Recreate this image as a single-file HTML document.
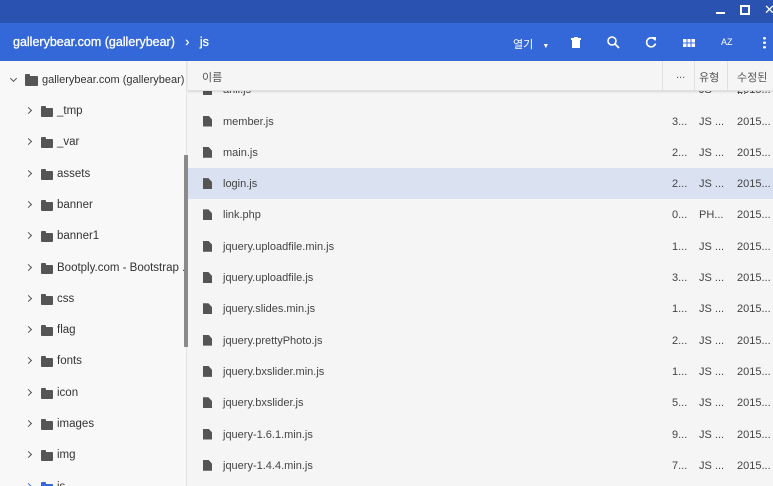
<!DOCTYPE html><html><head><meta charset="utf-8"><style>
*{margin:0;padding:0;box-sizing:border-box}
html,body{width:773px;height:486px;overflow:hidden}
body{font-family:"Liberation Sans","Noto Sans CJK KR",sans-serif;background:#f5f5f5;position:relative;font-size:13px;color:#333}
.tb{position:absolute;left:0;top:0;width:773px;height:23px;background:#2a52b0;z-index:5}
.bar{position:absolute;left:0;top:23px;width:773px;height:38px;background:#3468d8;color:#fff;z-index:5}
.left{position:absolute;left:0;top:61px;width:187px;height:425px;background:#f8f8f8;border-right:1px solid #e4e4e4;overflow:hidden}
.sb{position:absolute;left:184px;top:155px;width:4px;height:192px;background:#8a8a8a}
.t{position:absolute;height:20px;line-height:20px;font-size:11.5px;color:#333;white-space:nowrap}
.chev{position:absolute;width:5px;height:5px;border-right:1.3px solid #555;border-top:1.3px solid #555;transform:rotate(45deg)}
.fold{position:absolute;width:12px;height:9px;background:#555;border-radius:1px}
.fold:before{content:"";position:absolute;left:0;top:-2px;width:5px;height:3px;background:inherit;border-radius:1px 1px 0 0}
.hdr{position:absolute;left:188px;top:61px;width:585px;height:30px;background:#f5f5f5;border-bottom:1px solid #e0e0e0;font-size:11px;color:#555;z-index:4;box-shadow:0 1px 2px rgba(0,0,0,.12)}
.row{position:absolute;left:188px;width:585px;height:31px}
.fi{position:absolute;left:15px;top:10px;width:9px;height:11px;background:#555;clip-path:polygon(0 0,60% 0,100% 35%,100% 100%,0 100%)}
.row span{position:absolute;top:10px;font-size:11px;color:#444;white-space:nowrap}
#tree{position:absolute;left:0;top:0;width:187px;height:486px;overflow:hidden}
</style></head><body>
<div class="tb">
<div style="position:absolute;left:716px;top:12px;width:9px;height:2px;background:#fff"></div>
<div style="position:absolute;left:740px;top:5px;width:10px;height:10px;border:2px solid #fff"></div>
<div style="position:absolute;left:764px;top:2px;color:#fff;font-size:13px">✕</div>
</div>
<div class="bar">
<div style="position:absolute;left:13px;top:12px;font-size:12.5px;-webkit-text-stroke:0.3px #fff">gallerybear.com (gallerybear)&nbsp;&nbsp;&nbsp;›&nbsp;&nbsp;&nbsp;js</div>
<div style="position:absolute;left:513px;top:13px;font-size:11px">열기&nbsp;&nbsp; <span style="font-size:7px">▼</span></div>
<svg style="position:absolute;left:571px;top:14px" width="10" height="11"><rect x="0" y="1" width="10" height="2" fill="#fff"/><rect x="3" y="0" width="4" height="2" fill="#fff"/><rect x="1" y="3" width="8" height="8" fill="#fff"/></svg>
<svg style="position:absolute;left:607px;top:13px" width="13" height="13"><circle cx="5" cy="5" r="4" stroke="#fff" stroke-width="1.6" fill="none"/><line x1="8" y1="8" x2="12" y2="12" stroke="#fff" stroke-width="1.8"/></svg>
<svg style="position:absolute;left:645px;top:13px" width="12" height="12"><path d="M10 4A4.5 4.5 0 1 0 10.5 7.5" stroke="#fff" stroke-width="1.6" fill="none"/><path d="M7 1L11 1L11 5Z" fill="#fff"/></svg>
<svg style="position:absolute;left:683px;top:16px" width="12" height="8"><rect width="12" height="8" fill="#fff"/><path d="M4 0V8M8 0V8M0 4H12" stroke="#3468d8" stroke-width="1"/></svg>
<div style="position:absolute;left:721px;top:14px;font-size:9px">AZ</div>
<div style="position:absolute;left:763px;top:13px;width:3px;height:13px;background:radial-gradient(circle,#fff 1.3px,transparent 1.5px) 0 0/3px 4.5px"></div>
</div>
<div class="left"></div>
<div id="tree"></div>
<div class="sb"></div>
<div id="rows"></div>
<div class="hdr">
<div style="position:absolute;left:14px;top:8px">이름</div>
<div style="position:absolute;left:474px;top:0;height:30px;border-left:1px solid #e0e0e0"></div>
<div style="position:absolute;left:488px;top:8px">...</div>
<div style="position:absolute;left:506px;top:0;height:30px;border-left:1px solid #e0e0e0"></div>
<div style="position:absolute;left:511px;top:8px">유형</div>
<div style="position:absolute;left:539px;top:0;height:30px;border-left:1px solid #e0e0e0"></div>
<div style="position:absolute;left:549px;top:8px">수정된 ...</div>
</div>
<script>
var tn=["_tmp","_var","assets","banner","banner1","Bootply.com - Bootstrap ...","css","flag","fonts","icon","images","img","js"];
var h='<div class="chev" style="left:11px;top:76px;transform:rotate(135deg)"></div><div class="fold" style="left:25px;top:76px;width:13px;height:10px"></div><div class="t" style="left:42px;top:70px;font-size:11px">gallerybear.com (gallerybear)</div>';
tn.forEach(function(n,i){var y=111+i*31.3;var c=i==12?"#3468d8":"#555";
h+='<div class="chev" style="left:26px;top:'+(y-3)+'px;border-color:'+c+'"></div><div class="fold" style="left:41px;top:'+(y-3)+'px;background:'+c+'"></div><div class="t" style="left:57px;top:'+(y-10)+'px">'+n+'</div>';});
document.getElementById("tree").innerHTML=h;
var f=[["ahil.js","","JS","2015..."],["member.js","3...","JS ...","2015..."],["main.js","2...","JS ...","2015..."],["login.js","2...","JS ...","2015..."],["link.php","0...","PH...","2015..."],["jquery.uploadfile.min.js","1...","JS ...","2015..."],["jquery.uploadfile.js","3...","JS ...","2015..."],["jquery.slides.min.js","1...","JS ...","2015..."],["jquery.prettyPhoto.js","2...","JS ...","2015..."],["jquery.bxslider.min.js","1...","JS ...","2015..."],["jquery.bxslider.js","5...","JS ...","2015..."],["jquery-1.6.1.min.js","9...","JS ...","2015..."],["jquery-1.4.4.min.js","7...","JS ...","2015..."]];
h="";f.forEach(function(r,i){var y=105.5+(i-1)*31.3;var bg=i==3?"background:#dae1f1;":"";
h+='<div class="row" style="top:'+y+'px;'+bg+'"><div class="fi"></div><span style="left:35px">'+r[0]+'</span><span style="left:484px">'+r[1]+'</span><span style="left:511px">'+r[2]+'</span><span style="left:549px">'+r[3]+'</span></div>';});
document.getElementById("rows").innerHTML=h;
</script>
</body></html>
